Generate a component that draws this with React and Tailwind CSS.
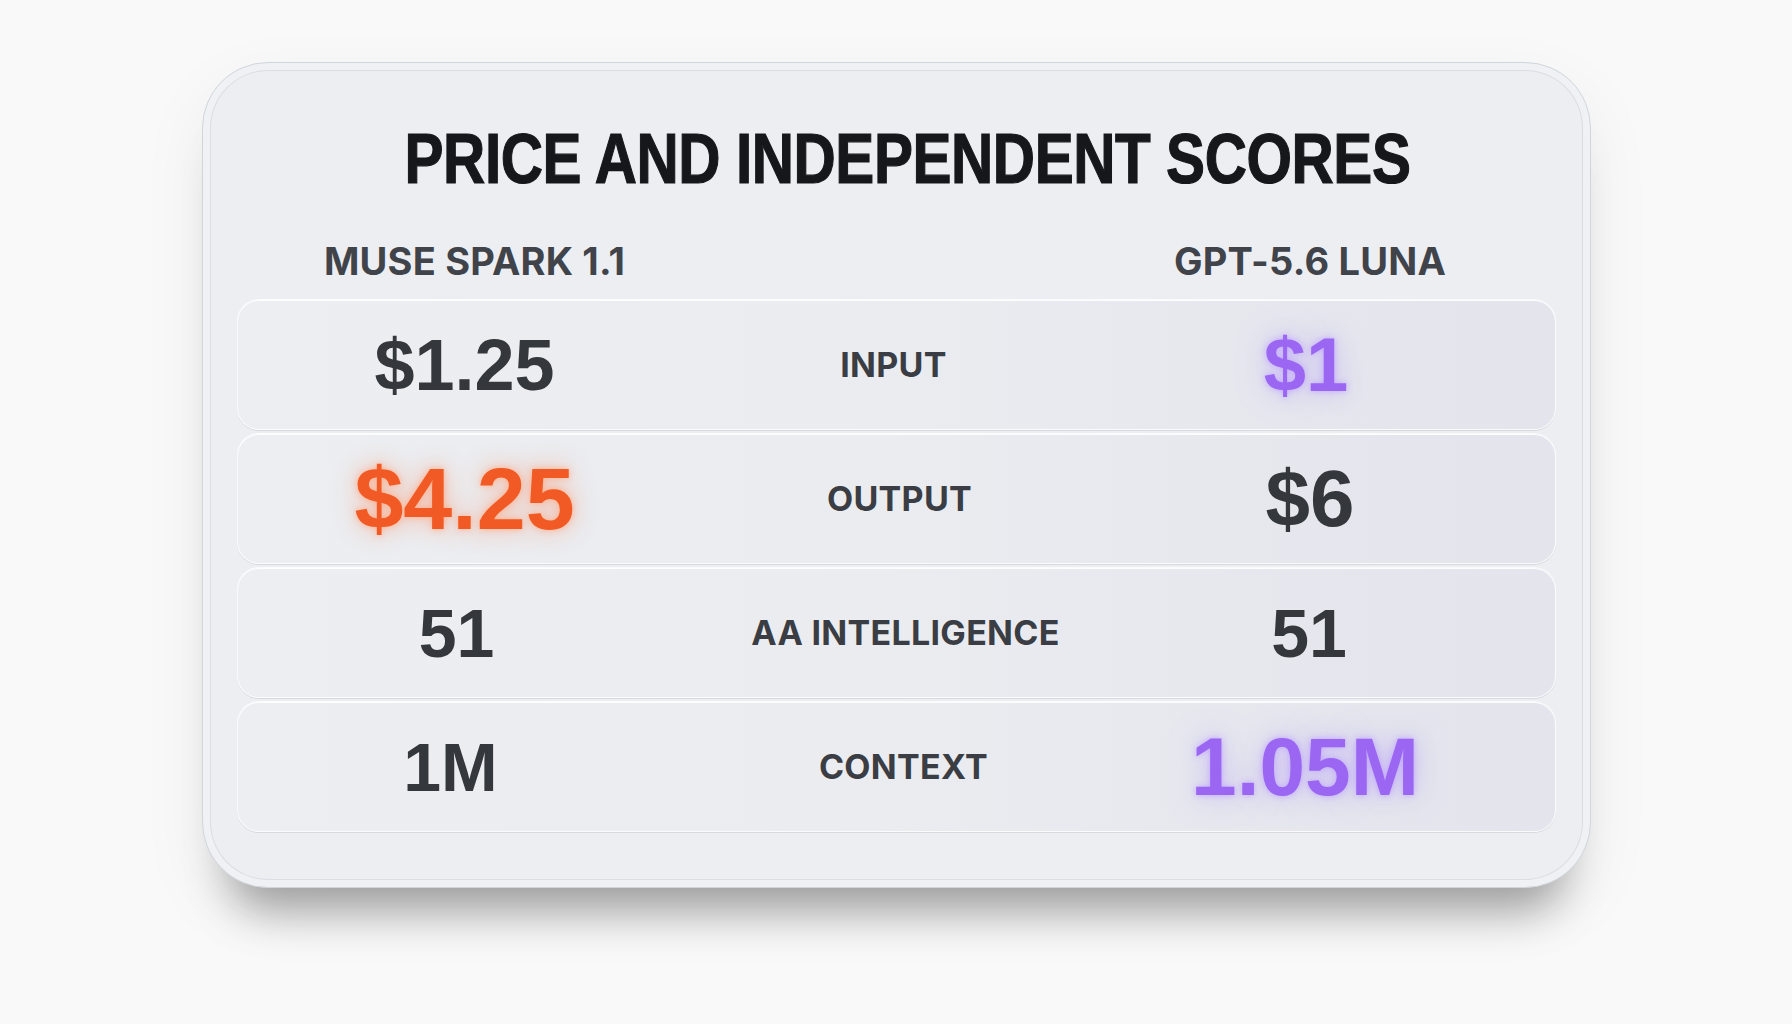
import React from 'react';

const rows = [
  { left: '$1.25', leftCls: 'text-[72px] text-[#34373c]', label: 'INPUT', labelCls: 'pr-[20px]', right: '$1', rightCls: 'text-[76px] text-[#9a66f2] pr-[8px] [text-shadow:0_0_6px_rgba(190,160,255,0.9),0_0_28px_rgba(167,139,250,0.55)]' },
  { left: '$4.25', leftCls: 'text-[88px] text-[#f15a24] [text-shadow:0_0_6px_rgba(255,170,130,0.9),0_0_26px_rgba(255,110,60,0.45)]', label: 'OUTPUT', labelCls: 'pr-[8px]', right: '$6', rightCls: 'text-[80px] text-[#34373c]' },
  { left: '51', leftCls: 'text-[68px] text-[#34373c] pr-[16px]', label: 'AA INTELLIGENCE', labelCls: 'pl-[4px]', right: '51', rightCls: 'text-[68px] text-[#34373c] pr-[2px]' },
  { left: '1M', leftCls: 'text-[68px] text-[#34373c] pr-[28px]', label: 'CONTEXT', labelCls: '', right: '1.05M', rightCls: 'text-[82px] text-[#9a66f2] pr-[10px] [text-shadow:0_0_6px_rgba(190,160,255,0.9),0_0_28px_rgba(167,139,250,0.55)]' },
];

export default function App() {
  return (
    <div className="w-full h-[1024px] bg-[#f9f9fa] flex justify-center pt-[62px] font-['Inter',sans-serif]">
      {/* glass card */}
      <div className="w-[1389px] h-[826px] rounded-[66px] bg-[#eceef2] border border-[#d2d6dc] px-[34px] pt-[61px] shadow-[inset_0_0_0_7px_rgba(255,255,255,0.6),inset_0_0_0_8px_rgba(205,210,218,0.6),0_50px_44px_-28px_rgba(0,0,0,0.34),0_24px_70px_rgba(0,0,0,0.06)]">
        <h1 className="h-[70px] leading-none text-center text-[70px] font-bold text-[#15171a] font-['Liberation_Sans',Arial,sans-serif] scale-x-[0.835] tracking-[-0.5px] ml-[22px] [-webkit-text-stroke:1.2px_#15171a]">
          PRICE AND INDEPENDENT SCORES
        </h1>

        <div className="grid grid-cols-[454px_424px_1fr] pr-[50px] mt-[48px] h-[38px] items-center text-[38px] leading-none font-bold text-[#40444a] tracking-[0.2px]">
          <div className="text-center pl-[22px]">MUSE SPARK 1.1</div>
          <div></div>
          <div className="text-center">GPT-5.6 LUNA</div>
        </div>

        <div className="mt-[19px] flex flex-col gap-[3px]">
          {rows.map((r) => (
            <div
              key={r.label}
              className="h-[131px] rounded-[22px] border border-white/80 bg-gradient-to-r from-[#eceef1] via-[#eaecf0] to-[#e3e4ec] shadow-[0_1px_0_rgba(200,204,212,0.6),inset_0_1px_0_rgba(255,255,255,0.9)] grid grid-cols-[454px_424px_1fr] pr-[50px] items-center"
            >
              <div className={`text-center font-bold leading-none font-['Liberation_Sans',Arial,sans-serif] ${r.leftCls}`}>
                {r.left}
              </div>
              <div className={`text-center text-[34px] font-bold leading-none text-[#3a3d43] tracking-[0.3px] ${r.labelCls}`}>
                {r.label}
              </div>
              <div className={`text-center font-bold leading-none font-['Liberation_Sans',Arial,sans-serif] ${r.rightCls}`}>
                {r.right}
              </div>
            </div>
          ))}
        </div>
      </div>
    </div>
  );
}
